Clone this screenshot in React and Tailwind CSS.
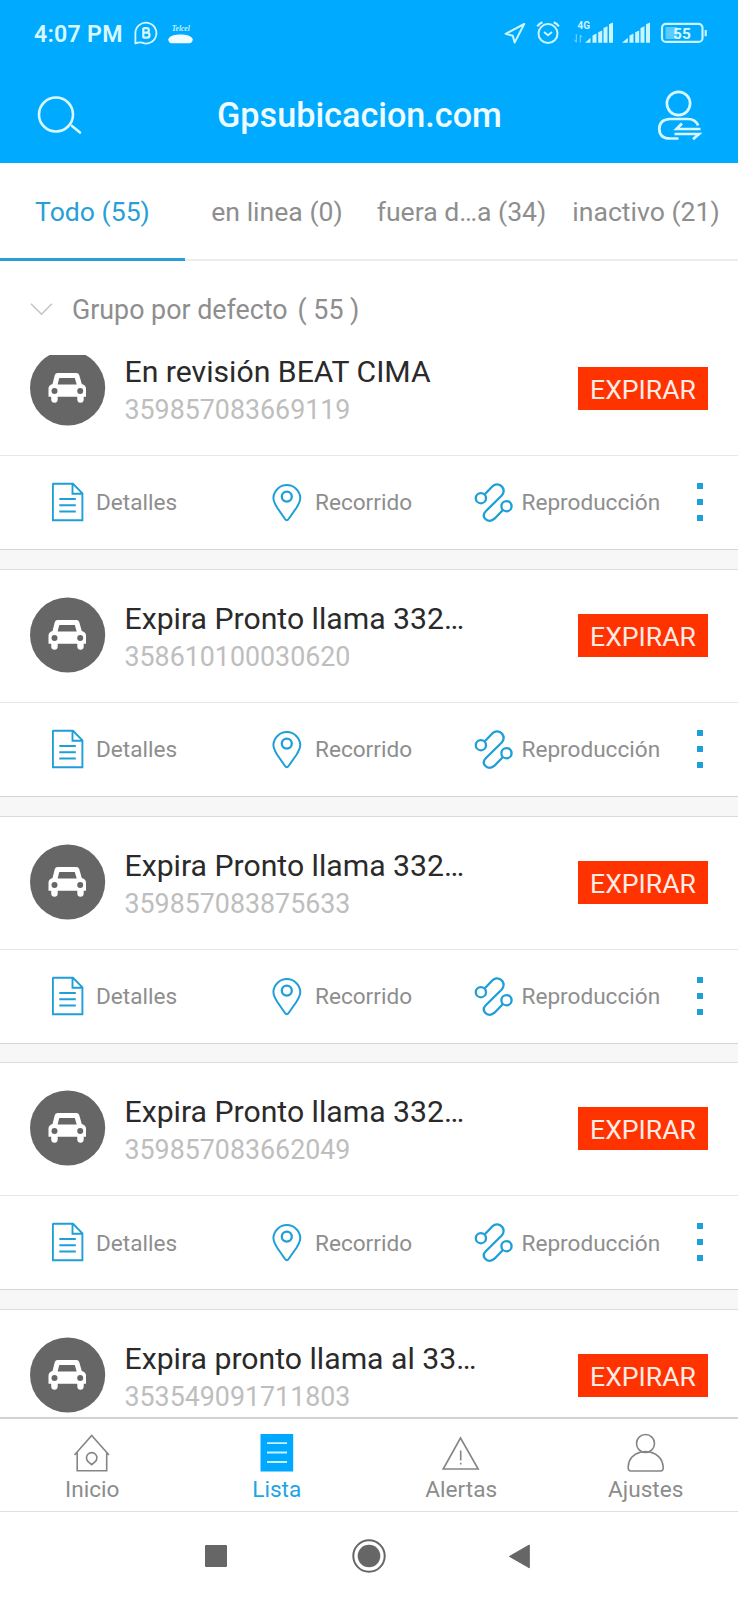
import React from "react";

const devices = [
  { name: "En revisión BEAT CIMA", imei: "359857083669119" },
  { name: "Expira Pronto llama 332…", imei: "358610100030620" },
  { name: "Expira Pronto llama 332…", imei: "359857083875633" },
  { name: "Expira Pronto llama 332…", imei: "359857083662049" },
  { name: "Expira pronto llama al 33…", imei: "353549091711803" },
];

function ChatIcon() {
  return (
    <svg className="ml-[11px] h-6 w-6 shrink-0" viewBox="0 0 24 24" fill="none" stroke="#d8f8ff" strokeWidth="1.8">
      <path d="M1.4 22.4V12A10.5 10.4 0 1 1 7 21.3Q4.4 21.2 1.4 22.4Z" strokeLinejoin="round" />
      <path d="M9.3 7v10M9.3 7.2h3.300a2.200 2.200 0 0 1 0 4.500H9.300h3.700a2.500 2.500 0 0 1 0 5H9.300" strokeWidth="2.200" />
    </svg>
  );
}

function NoticeIcon() {
  return (
    <span className="mt-[4px] ml-[10px] flex h-[20px] w-[26px] shrink-0 flex-col items-center">
      <span className="h-[9px] font-['Liberation_Serif',serif] text-[7.500px] leading-[8px] font-bold whitespace-nowrap text-[#c4f2ff] italic">
        Telcel
      </span>
      <svg className="h-[10px] w-[25px] shrink-0" viewBox="0 0 25 10">
        <path d="M.3 5.2C1.5 1.8 7 .4 12.5.4S23.5 1.8 24.700 5.200C24.700 7.500 23.500 9.200 21.500 9.200H3.500C1.500 9.200.3 7.500.3 5.200Z" fill="#effdff" />
      </svg>
    </span>
  );
}

function StatusIcons() {
  return (
    <svg className="h-[30px] w-[210px]" viewBox="500 18 210 30" fill="none" stroke="#c9f5ff">
      <path d="M524.2 24L505.600 33.800L512.800 35.800L514.600 42.600Z" strokeWidth="2" strokeLinejoin="round" />
      <circle cx="548" cy="33.600" r="9.500" strokeWidth="2" />
      <path d="M544 32l4 3.200 4-3.200" strokeWidth="2" />
      <path d="M537.300 26.300q2-2.800 5.200-4M558.900 26.300q-2-2.800-5.200-4" strokeWidth="2.200" />
      <text x="577.500" y="29.200" fill="#c9f5ff" stroke="none" fontFamily="Roboto, sans-serif" fontWeight="700" fontSize="10">4G</text>
      <path d="M576.300 34v8M576.300 42.300l-2-2.500M580.300 42.500v-7.500l2 2.200" stroke="#7fd9ff" strokeWidth="1" />
      <g fill="#c9f5ff" stroke="none">
        <path d="M585 42.700l5.500-5v5zM592.500 35.500l4-2v9.200h-4zM598.200 32.200l4-1.800v12.300h-4zM603.500 28l4-1.800v16.500h-4zM609 24.300l4-1.800v20.200h-4z" />
        <path d="M622 42.700l5.800-5v5zM629.500 35.500l4-2v9.200h-4zM635.200 32.200l4-1.800v12.300h-4zM640.500 28l4-1.800v16.500h-4zM646 24.300l4-1.800v20.200h-4z" />
      </g>
      <rect x="662" y="23.900" width="40.500" height="18" rx="4" strokeWidth="2.200" />
      <rect x="665.500" y="27" width="12" height="12" rx="1" fill="#5ccbff" stroke="none" />
      <path d="M705.700 30v6.200" strokeWidth="2.200" />
      <text x="682" y="38.700" textAnchor="middle" fill="#d8f9ff" stroke="none" fontFamily="Roboto, sans-serif" fontWeight="700" fontSize="15.500">55</text>
    </svg>
  );
}

function SearchIcon() {
  return (
    <svg className="h-[42px] w-[46px]" viewBox="36 93 46 42" fill="none" stroke="#d8f8ff" strokeWidth="2.600" strokeLinecap="round">
      <circle cx="56" cy="113.500" r="17" />
      <path d="M72 125l8 6.500" />
    </svg>
  );
}

function SwitchUserIcon() {
  return (
    <svg className="h-[52px] w-[46px]" viewBox="656 88 46 52" fill="none" stroke="#d8f8ff" strokeWidth="2.700">
      <circle cx="678.500" cy="102.500" r="11.600" />
      <path d="M698.200 124.500C696.500 120.500 692.500 118 688 118H670Q659.300 118.500 659.300 128Q659.500 137.500 670 137.500H678.500" />
      <path d="M700.500 128H676.500L682 122.500M674.500 133H699L693 138.200" />
    </svg>
  );
}

function CarBadge() {
  return (
    <svg className="h-[76px] w-[76px] shrink-0" viewBox="0 0 76 76">
      <circle cx="37.600" cy="38" r="37.600" fill="#666666" />
      <path
        d="M27.500 23H46.500Q48.500 23 49.200 25L51.800 34Q55.900 35 56 38.500V46.700H53.700V49.500Q53.500 52.700 50.500 52.700Q47.500 52.700 47.300 49.500V46.700H27.700V49.500Q27.500 52.700 24.500 52.700Q21.400 52.700 21.200 49.500V46.700H18.500V38.500Q18.600 35 22.500 34L24.800 25Q25.500 23 27.500 23Z"
        fill="#fff"
      />
      <path d="M29.300 28H44.800L46.700 34.500H27.600Z" fill="#666" />
      <circle cx="24.500" cy="41" r="3" fill="#666" />
      <circle cx="50.200" cy="41" r="3" fill="#666" />
    </svg>
  );
}

function DocIcon() {
  return (
    <svg className="h-10 w-8 shrink-0" viewBox="0 0 32 40" fill="none" stroke="#1f9fd8" strokeWidth="1.900">
      <path d="M.9 2.200Q.9 1.800 1.300 1.800H21L30.400 11.400V38.200H.9ZM20.500 2V11.800H30.200M7.300 17H23.800M7.300 23.300H23.800M7.300 29.500H23.800" />
    </svg>
  );
}

function PinIcon() {
  return (
    <svg className="h-10 w-[30px] shrink-0" viewBox="0 0 30 40" fill="none" stroke="#1f9fd8">
      <path d="M14.800 38.200Q13.800 38.200 13 37L5.200 25.700Q1.400 19.800 1.400 15.500A13.500 13.600 0 0 1 28.300 15.500Q28.300 19.800 24.500 25.700L16.600 37Q15.800 38.200 14.800 38.200Z" strokeWidth="2" />
      <circle cx="14.800" cy="14.600" r="5" strokeWidth="2.300" />
    </svg>
  );
}

function RouteIcon() {
  return (
    <svg className="h-10 w-10 shrink-0" viewBox="0 0 40 40" fill="none" stroke="#1f9fd8" strokeWidth="2.300">
      <circle cx="6.900" cy="16.200" r="5.100" />
      <circle cx="32.500" cy="24.200" r="5.100" />
      <path d="M10.800 12.300L18.500 4.200C21.500 1.200 26 2 28.300 5C30.300 8 30 11 27.500 13.700L12 29C9.500 31.500 9.300 34.500 11 36.500C13.500 39.500 17.500 39.500 20.500 36.700L28.700 28.200" />
    </svg>
  );
}

function CardActions() {
  return (
    <>
      <div className="flex h-[94px] items-center border-b border-[#d4d4d4] pb-px text-[22.600px] text-[#8e8e8e]">
        <button className="flex w-[220px] items-center pl-[52px]">
          <DocIcon />
          <span className="mt-[3px] ml-[12px]">Detalles</span>
        </button>
        <button className="flex w-[201px] items-center pl-[52px]">
          <PinIcon />
          <span className="mt-[3px] ml-[13px]">Recorrido</span>
        </button>
        <button className="flex w-[276px] items-center pl-[52.500px]">
          <RouteIcon />
          <span className="mt-[3px] ml-[8px]">Reproducción</span>
        </button>
        <span className="flex flex-col gap-[10px]">
          <i className="h-[6px] w-[6px] bg-[#1d9fdb]" />
          <i className="h-[6px] w-[6px] bg-[#1d9fdb]" />
          <i className="h-[6px] w-[6px] bg-[#1d9fdb]" />
        </span>
      </div>
      <div className="flex-1 bg-[#f7f7f7]" />
    </>
  );
}

function DeviceCard({ name, imei, showActions }) {
  return (
    <article className="flex h-[246.8px] shrink-0 flex-col">
      <div className="flex h-[134px] shrink-0 items-start border-t border-b border-t-[#dcdcdc] border-b-[#e6e6e6] pr-[30px] pl-[30px]">
        <div className="mt-[27px]">
          <CarBadge />
        </div>
        <div className="mt-[30px] ml-[18.500px] flex-1 whitespace-nowrap">
          <h2 className="text-[30.200px] leading-[38px] text-[#2a2a2a]">{name}</h2>
          <p className="text-[26.800px] leading-[39px] text-[#bebebe]">{imei}</p>
        </div>
        <span className="mt-[44px] flex h-[43px] w-[130px] items-center justify-center bg-[#ff3300] pt-[3px] text-[26.600px] text-[#ffece6]">
          EXPIRAR
        </span>
      </div>
      {showActions && <CardActions />}
    </article>
  );
}

function NavItem({ label, active, children }) {
  return (
    <button className={active ? "flex flex-1 flex-col items-center text-[#1ea4e4]" : "flex flex-1 flex-col items-center text-[#8c8c8c]"}>
      <svg className="mt-[14px] h-10 w-10 shrink-0" viewBox="0 0 40 40" fill="none" stroke="#858585" strokeWidth="1.600">
        {children}
      </svg>
      <span className="mt-[1px] text-[22.600px] leading-[32px]">{label}</span>
    </button>
  );
}

export default function App() {
  return (
    <main className="flex h-[1600px] w-[738px] flex-col overflow-hidden bg-white font-[Roboto,sans-serif]">
      <header className="h-[163px] shrink-0 bg-[#00aaff]">
        <div className="flex h-[66px] items-center pl-[34px]">
          <span className="mt-[2px] text-[23.200px] font-semibold tracking-[0.25px] whitespace-nowrap text-[#d8f8ff]">4:07 PM</span>
          <ChatIcon />
          <NoticeIcon />
          <div className="mr-[28px] ml-auto flex">
            <StatusIcons />
          </div>
        </div>
        <div className="flex h-[97px] items-center justify-between pr-[36px] pl-[36px]">
          <SearchIcon />
          <h1 className="mt-[2px] mr-[19px] text-[34.200px] font-medium text-[#effcff]">Gpsubicacion.com</h1>
          <SwitchUserIcon />
        </div>
      </header>

      <nav className="flex h-[98px] shrink-0 text-[26.600px] whitespace-nowrap text-[#8e8e8e]">
        <div className="flex w-[185px] items-center justify-center border-b-[3px] border-[#2a9fd6] pt-[3px] text-[#2a9fd6]">Todo (55)</div>
        <div className="flex w-[184px] items-center justify-center border-b-2 border-[#ededed] pt-[2px]">en linea (0)</div>
        <div className="flex w-[185px] items-center justify-center border-b-2 border-[#ededed] pt-[2px]">fuera d…a (34)</div>
        <div className="flex w-[184px] items-center justify-center border-b-2 border-[#ededed] pt-[2px]">inactivo (21)</div>
      </nav>

      <div className="flex h-[94px] shrink-0 items-center pt-[3px] pl-[30px] text-[26.800px] text-[#8e8e8e]">
        <svg className="h-[14px] w-[24px]" viewBox="0 0 24 14" fill="none" stroke="#c2c2c2" strokeWidth="1.400">
          <path d="M1 .8L11.500 11.300L22 .8" />
        </svg>
        <span className="mt-px ml-[18px]">Grupo por defecto</span>
        <span className="mt-px ml-[10px]">( 55 )</span>
      </div>

      <section className="flex h-[1062px] shrink-0 flex-col overflow-hidden">
        <div className="-mt-[33.1px] flex flex-col">
          {devices.map((d, i) => (
            <DeviceCard key={d.imei} name={d.name} imei={d.imei} showActions={i < devices.length - 1} />
          ))}
        </div>
      </section>

      <nav className="flex h-[95px] shrink-0 border-t-2 border-b border-t-[#d2d2d2] border-b-[#e0e0e0]">
        <NavItem label="Inicio">
          <path d="M2.500 22L19.700 2.500L37 22M5.200 19.500V37.800H34.700V19.500" />
          <path d="M19.700 31.700L16.400 28.800A5.200 5.200 0 1 1 23 28.800Z" />
        </NavItem>
        <NavItem label="Lista" active>
          <path d="M3.500 1H36.200V38.500H3.500Z" fill="#00a8ff" stroke="none" />
          <path d="M10 10.200H30M10 19.500H30M10 29H30" stroke="#c9f2ff" strokeWidth="1.800" />
        </NavItem>
        <NavItem label="Alertas">
          <path d="M19.500 5L37.200 36H2.200Z" />
          <path d="M19.700 17.500V27.500M19.700 29.800V31.500" />
        </NavItem>
        <NavItem label="Ajustes">
          <circle cx="19.500" cy="10.500" r="9" />
          <path d="M15 19Q2.500 22.500 2.200 34Q2 38 5 38H34.500Q37.500 38 37.200 34Q36.500 22.500 24 19Q19.500 18 15 19Z" />
        </NavItem>
      </nav>

      <footer className="flex h-[88px] shrink-0 items-center pl-[205px]">
        <svg className="h-[36px] w-[328px]" viewBox="205 1537.500 328 36">
          <rect x="205" y="1544.500" width="22" height="22" rx="1" fill="#666" />
          <circle cx="369" cy="1555.500" r="15.700" fill="none" stroke="#666" strokeWidth="2" />
          <circle cx="369" cy="1555.500" r="11.300" fill="#666" />
          <path d="M529.300 1544.500V1567.300L509.500 1555.900Z" fill="#666" stroke="#666" strokeWidth="1" strokeLinejoin="round" />
        </svg>
      </footer>
    </main>
  );
}
